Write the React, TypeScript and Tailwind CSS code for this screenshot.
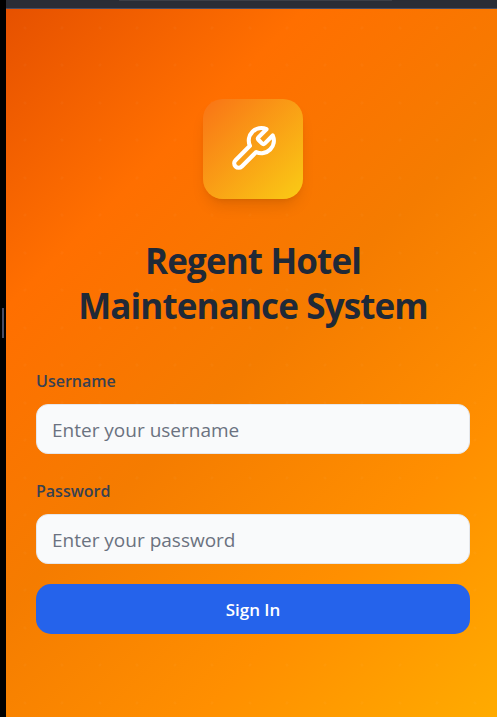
import React from "react";

type FieldProps = {
  id: string;
  label: string;
  type: string;
  placeholder: string;
};

function WrenchIcon() {
  return (
    <svg
      viewBox="0 0 24 24"
      className="size-[50px] text-white"
      fill="none"
      stroke="currentColor"
      strokeWidth={2}
      strokeLinecap="round"
      strokeLinejoin="round"
      aria-hidden="true"
    >
      <path d="M14.7 6.3a1 1 0 0 0 0 1.4l1.6 1.6a1 1 0 0 0 1.4 0l3.77-3.77a6 6 0 0 1-7.94 7.94l-6.91 6.91a2.12 2.12 0 0 1-3-3l6.91-6.91a6 6 0 0 1 7.94-7.94l-3.76 3.76z" />
    </svg>
  );
}

function Field({ id, label, type, placeholder }: FieldProps) {
  return (
    <div className="flex flex-col gap-2.5">
      <label htmlFor={id} className="text-[16px] leading-[26px] font-semibold text-[#374151]">
        {label}
      </label>
      <input
        id={id}
        name={id}
        type={type}
        placeholder={placeholder}
        className="h-[50px] w-full rounded-xl border border-[#e5e7eb] bg-[#f9fafb] px-[15px] pt-0.5 text-[19px] text-[#1f2937] placeholder:text-[#6b7280]"
      />
    </div>
  );
}

export default function App() {
  return (
    <div className="flex min-h-screen bg-black font-['Segoe_UI','Open_Sans','Noto_Sans',sans-serif]">
      <div className="flex w-[6px] shrink-0 items-center justify-center pb-[72px]">
        <div className="h-[30px] w-[2px] bg-[#4a4d63]" />
      </div>
      <div className="flex min-w-0 flex-1 flex-col">
        <div className="flex h-[9px] justify-center border-b border-[#4a4d63] bg-[#2a2d36] pl-2">
          <div className="h-px w-[273px] bg-[#3c3f48]" />
        </div>
        <main className="flex flex-1 flex-col bg-[linear-gradient(135deg,#e65100_0%,#ff6f00_25%,#f57c00_50%,#ff8f00_75%,#ffab00_100%)]">
          {/* faint dot grid over the gradient */}
          <div className="flex flex-1 flex-col items-center bg-[radial-gradient(circle_at_19px_19px,#ffffff06_1px,transparent_2px),radial-gradient(circle_at_56px_19px,#ffffff06_1px,transparent_2px),radial-gradient(circle_at_19px_56px,#ffffff06_1px,transparent_2px),radial-gradient(circle_at_56px_56px,#ffffff06_1px,transparent_2px)] bg-[length:75px_75px] pt-[90px] pr-[27px] pl-[30px]">
            <div className="flex size-[100px] items-center justify-center rounded-[20px] bg-[linear-gradient(to_bottom_right,#f97316,#facc15)] shadow-lg">
              <WrenchIcon />
            </div>
            <h1 className="mt-[39px] text-center text-[35px] leading-[45px] font-bold tracking-tight text-[#1f2937]">
              <span className="block">Regent Hotel</span>
              <span className="block">Maintenance System</span>
            </h1>
            <form className="mt-10 flex w-full flex-col gap-5" onSubmit={(e) => e.preventDefault()}>
              <div className="flex flex-col gap-6">
                <Field id="username" label="Username" type="text" placeholder="Enter your username" />
                <Field id="password" label="Password" type="password" placeholder="Enter your password" />
              </div>
              <button type="submit" className="h-[50px] w-full rounded-[15px] bg-[#2563eb] pt-px text-[17px] font-semibold text-white">
                Sign In
              </button>
            </form>
          </div>
        </main>
      </div>
    </div>
  );
}
